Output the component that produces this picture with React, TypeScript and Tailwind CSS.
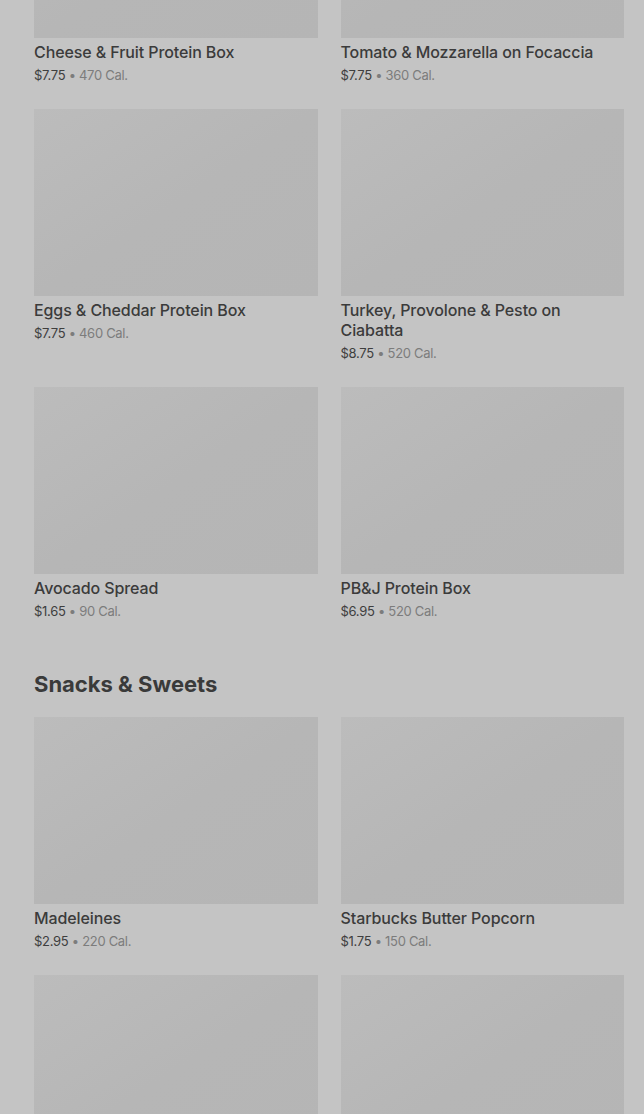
import React from "react";

type Item = { name: string; price: string; cal: string };

const sandwiches: Item[] = [
  { name: "Cheese & Fruit Protein Box", price: "$7.75", cal: "470 Cal." },
  { name: "Tomato & Mozzarella on Focaccia", price: "$7.75", cal: "360 Cal." },
  { name: "Eggs & Cheddar Protein Box", price: "$7.75", cal: "460 Cal." },
  { name: "Turkey, Provolone & Pesto on Ciabatta", price: "$8.75", cal: "520 Cal." },
  { name: "Avocado Spread", price: "$1.65", cal: "90 Cal." },
  { name: "PB&J Protein Box", price: "$6.95", cal: "520 Cal." },
];

const snacks: Item[] = [
  { name: "Madeleines", price: "$2.95", cal: "220 Cal." },
  { name: "Starbucks Butter Popcorn", price: "$1.75", cal: "150 Cal." },
  { name: "", price: "", cal: "" },
  { name: "", price: "", cal: "" },
];

function Card({ item, first }: { item: Item; first?: boolean }) {
  return (
    <div className="flex flex-col">
      <div
        className={`h-[187px] w-full bg-[#b6b6b6] bg-gradient-to-br from-[#bcbcbc] via-[#b6b6b6] to-[#b5b5b5] ${
          first ? "-mt-[149px]" : ""
        }`}
      />
      {item.name && (
        <>
          <div className="mt-[4px] pr-[4px] text-[16px] font-medium leading-[20px] tracking-[-0.1px] text-[#3b3b3b]">
            {item.name}
          </div>
          <div className="mt-[3px] text-[13px] leading-[20px] tracking-[-0.3px]">
            <span className="text-[#3e3e3e]">{item.price}</span>
            <span className="text-[#7c7c7c]"> • {item.cal}</span>
          </div>
        </>
      )}
    </div>
  );
}

export default function App() {
  return (
    <div
      className="h-[1114px] w-[644px] overflow-hidden bg-[#c4c4c4] pl-[34px] pr-[20px]"
      style={{ fontFamily: "Inter, 'Noto Sans', sans-serif" }}
    >
      <div className="grid grid-cols-2 gap-x-[23px] gap-y-[24px]">
        {sandwiches.map((it, i) => (
          <Card key={i} item={it} first={i < 2} />
        ))}
      </div>
      <h2 className="mt-[49px] mb-[19px] text-[22px] font-bold leading-[28px] text-[#3a3a3a]">
        Snacks &amp; Sweets
      </h2>
      <div className="grid grid-cols-2 gap-x-[23px] gap-y-[24px]">
        {snacks.map((it, i) => (
          <Card key={i} item={it} />
        ))}
      </div>
    </div>
  );
}
